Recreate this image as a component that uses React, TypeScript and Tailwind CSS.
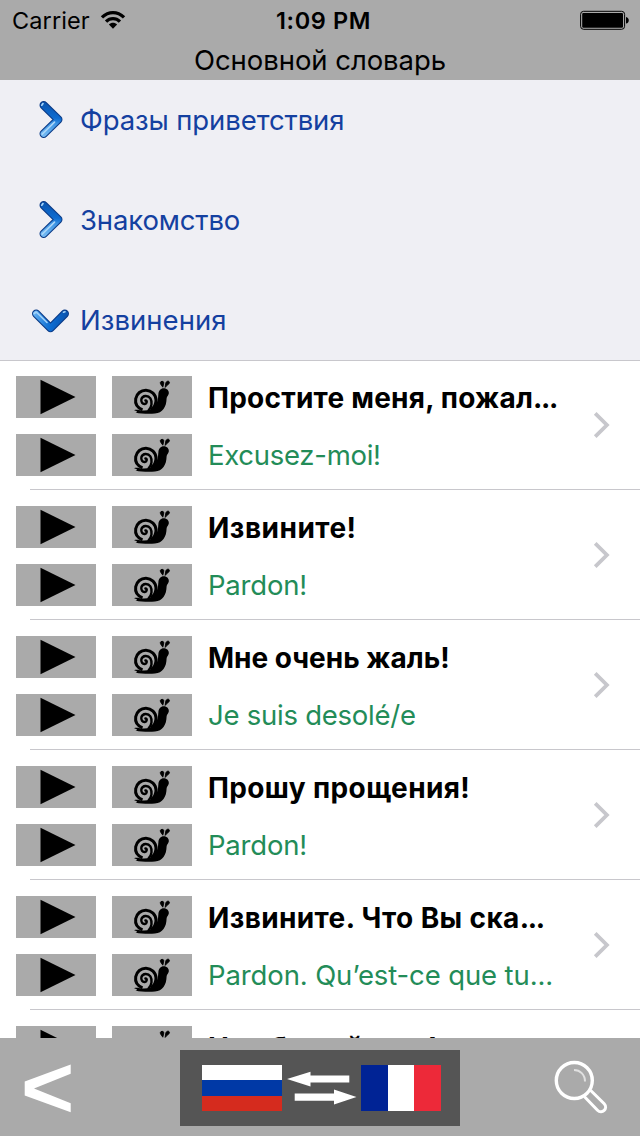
const sections = [
  { title: 'Фразы приветствия', open: false, tracking: 'tracking-[-0.1px]' },
  { title: 'Знакомство', open: false, tracking: 'tracking-[-0.15px]' },
  { title: 'Извинения', open: true, tracking: 'tracking-[0.05px]' },
];

const phrases = [
  { source: 'Простите меня, пожал', cut: true, target: 'Excusez-moi!', tracking: 'tracking-[0.24px]', targetTracking: 'tracking-[-0.28px]' },
  { source: 'Извините!', cut: false, target: 'Pardon!', tracking: 'tracking-[0.5px]', targetTracking: 'tracking-[-0.2px]' },
  { source: 'Мне очень жаль!', cut: false, target: 'Je suis desolé/e', tracking: 'tracking-[0px]', targetTracking: 'tracking-[-0.25px]' },
  { source: 'Прошу прощения!', cut: false, target: 'Pardon!', tracking: 'tracking-[0.37px]', targetTracking: 'tracking-[-0.2px]' },
  { source: 'Извините. Что Вы ска', cut: true, target: 'Pardon. Qu’est-ce que tu...', tracking: 'tracking-[0.38px]', targetTracking: 'tracking-[-0.12px]' },
  { source: 'Не обижайтесь!', cut: false, target: '', tracking: 'tracking-[0.2px]', targetTracking: '' },
];

function SectionArrow({ open }: { open: boolean }) {
  const d = open ? 'M6.2 13.7 L20.5 28.1 L34.8 13.7' : 'M13.7 5.2 L28.3 19.5 L13.7 33.8';
  return (
    <svg width="40" height="40" viewBox="0 0 40 40" fill="none" strokeLinecap="round" strokeLinejoin="round">
      <defs>
        <linearGradient id="blue-open" gradientUnits="userSpaceOnUse" x1="4" y1="12" x2="36" y2="18">
          <stop offset="0" stopColor="#62b0f2" />
          <stop offset="0.45" stopColor="#1a78d6" />
          <stop offset="0.6" stopColor="#0d6bd0" />
          <stop offset="1" stopColor="#0a55b0" />
        </linearGradient>
        <linearGradient id="blue-closed" gradientUnits="userSpaceOnUse" x1="18" y1="3" x2="14" y2="36">
          <stop offset="0" stopColor="#0a55b0" />
          <stop offset="0.42" stopColor="#0d6bd0" />
          <stop offset="0.6" stopColor="#3d94e4" />
          <stop offset="1" stopColor="#74baf3" />
        </linearGradient>
      </defs>
      <path d={d} stroke="#0b3a86" strokeWidth="8.4" />
      <path d={d} stroke={open ? 'url(#blue-open)' : 'url(#blue-closed)'} strokeWidth="6.2" />
      {open ? (
        <path d="M4.2 13.5 L6.2 12 L17 22.5 M33.5 12.2 L35 11.8" stroke="#a5d3f8" strokeWidth="1.6" />
      ) : (
        <path d="M11.8 5.2 L13 3.6 M12.2 34.2 L24.5 22.2" stroke="#a9d5f8" strokeWidth="1.7" />
      )}
    </svg>
  );
}

function PlayButton() {
  return (
    <button className="h-[42px] w-20 bg-[#aaaaaa]">
      <svg width="80" height="42" viewBox="0 0 80 42">
        <path d="M24.5 3.8 L59.5 21 L24.5 38.2 Z" />
      </svg>
    </button>
  );
}

function SnailButton() {
  return (
    <button className="h-[42px] w-20 bg-[#aaaaaa]">
      <svg width="80" height="42" viewBox="0 0 80 42">
        <path d="M22 34.2 C25 33.2 28 34.6 32 34.6 C41.5 34.2 46 29 46.4 18 C46.6 14.8 48.6 12.3 51.8 12.3 C55 12.3 57.2 14.8 56.8 17.6 C56.5 19.6 54.8 20.4 54.6 22.4 C54.4 31 50.5 36.8 43 37.5 C37 38.2 29 37.8 23.5 36.4 C26.5 36.1 25 35.2 22 34.2 Z" />
        <path
          d="M30.5 33.9 C25.4 31.8 22.9 27.8 23.7 22.8 C24.7 17.5 29 14.2 34 14.3 C39.5 14.5 43.8 18.6 44 24 C44.1 27.6 42.5 31 39.5 33.4"
          fill="none"
          stroke="#000"
          strokeWidth="3"
        />
        <path
          d="M36.6 34.4 C40 31 40.3 25.6 38.4 22.4 C36 18.9 30.6 19.2 29.4 23.1 C28.7 26.2 30.6 28.3 32.8 28 C35.2 27.5 35.3 24.8 33.4 24.5"
          fill="none"
          stroke="#000"
          strokeWidth="2.4"
          strokeLinecap="round"
        />
        <path
          d="M50.8 11.2 C50 9.6 48.1 8.2 48.3 6.6 C48.7 4.9 51.6 4.8 51.8 6.8 C51.8 8.4 51 9.4 50.8 11.2 Z M53.2 11.4 C53.5 9.6 53.2 8.2 54 6.5 C54.9 4.6 57.7 4.8 57.4 6.8 C57 8.8 54.4 9.2 53.2 11.4 Z"
          stroke="#000"
          strokeWidth="0.9"
        />
      </svg>
    </button>
  );
}

function StatusBar() {
  return (
    <div className="flex h-10 items-center justify-between pr-2.5 pl-3">
      <div className="flex w-[200px] items-center gap-2.5 pt-0.5">
        <span className="text-[23.5px] tracking-[0.1px]">Carrier</span>
        <svg className="-mt-0.5" width="26" height="20" viewBox="0 0 26 20">
          <path d="M0.8 6.3 C8 -0.9 18 -0.9 25.2 6.3 L22.9 8.6 C17.2 2.9 8.8 2.9 3.1 8.6 Z" />
          <path d="M4.9 10.4 C9.4 5.9 16.6 5.9 21.1 10.4 L18.8 12.7 C15.5 9.4 10.5 9.4 7.2 12.7 Z" />
          <path d="M13 18.8 L8.9 14.5 C11.2 12.2 14.8 12.2 17.1 14.5 Z" />
        </svg>
      </div>
      <span className="pt-0.5 pl-[3px] text-[23.5px] font-semibold tracking-[0.6px]">1:09 PM</span>
      <div className="flex w-[198px] justify-end">
        <svg width="50" height="20" viewBox="0 0 50 20">
          <rect x="0.6" y="1.3" width="44" height="18" rx="3" fill="none" stroke="#000" />
          <rect x="2.2" y="2.9" width="40.8" height="14.8" rx="1.2" />
          <path d="M46 7 C49.7 7.4 49.7 13.2 46 13.6 Z" />
        </svg>
      </div>
    </div>
  );
}

export default function App() {
  return (
    <div className="flex h-[1136px] w-[640px] flex-col overflow-hidden bg-white font-['Inter','Liberation_Sans',sans-serif] text-black">
      <header className="h-20 shrink-0 bg-[#aaaaaa]">
        <StatusBar />
        <h1 className="text-center text-[27.5px] leading-10 tracking-[-0.05px]">Основной словарь</h1>
      </header>

      <main className="min-h-0 flex-1 overflow-hidden">
        <div className="h-[281px] border-b border-[#c8c7cc] bg-[#efeff4]">
          {sections.map((section) => (
            <div key={section.title} className="flex h-[100px] items-start gap-2.5 pt-5 pl-[30px]">
              <SectionArrow open={section.open} />
              <span className={`text-[27.5px] leading-10 text-[#1440a0] ${section.tracking}`}>{section.title}</span>
            </div>
          ))}
        </div>

        <ul className="bg-white">
          {phrases.map((phrase) => (
            <li key={phrase.source} className="group">
              <div className="flex items-center pt-4 pb-[13px] pl-4 group-first:pt-[15px]">
                <div className="grid shrink-0 grid-cols-2 gap-4">
                  <PlayButton />
                  <SnailButton />
                  <PlayButton />
                  <SnailButton />
                </div>
                <div className="ml-4 flex w-[380px] flex-col gap-4 whitespace-nowrap">
                  <span className={`h-[42px] text-[28px] leading-[44px] font-bold ${phrase.tracking}`}>
                    {phrase.source}
                    {phrase.cut && <span className="tracking-[-1.4px]">...</span>}
                  </span>
                  <span className={`h-[42px] text-[27.5px] leading-[42px] text-[#238c58] ${phrase.targetTracking}`}>{phrase.target}</span>
                </div>
                <svg className="mb-[3px]" width="24" height="28" viewBox="0 0 24 28" fill="none" stroke="#c7c7cc" strokeWidth="3.8">
                  <path d="M7.2 2.4 L18.9 14 L7.2 25.6" />
                </svg>
              </div>
              <div className="ml-[30px] h-px bg-[#c8c7cc]" />
            </li>
          ))}
        </ul>
      </main>

      <footer className="z-10 flex h-[98px] shrink-0 items-center justify-between bg-[#aaaaaa] pt-0.5">
        <button className="w-[180px]">
          <svg width="100" height="60" viewBox="0 0 100 60">
            <path d="M70.7 6.5 V15.8 L34 30.5 L70.7 45.3 V54.2 L24.7 37.5 V23.5 Z" fill="#fff" />
          </svg>
        </button>
        <button className="flex h-19 w-[280px] items-center bg-[#555555] pl-[22px]">
          <span className="flex h-[46px] w-20 flex-col">
            <span className="flex-1 bg-white" />
            <span className="flex-1 bg-[#0039a6]" />
            <span className="flex-1 bg-[#d52b1e]" />
          </span>
          <svg width="79" height="46" viewBox="0 0 79 46" fill="#fff">
            <path d="M5 14 L28.5 6.8 V10.4 H67.3 V17.5 H28.5 V21.5 Z" />
            <path d="M74.5 32 L52 24.6 V28.5 H12.7 V35.7 H52 V39.5 Z" />
          </svg>
          <span className="flex h-[46px] w-20">
            <span className="flex-1 bg-[#002395]" />
            <span className="flex-1 bg-white" />
            <span className="flex-1 bg-[#ed2939]" />
          </span>
        </button>
        <button className="flex w-[180px] justify-end pr-7">
          <svg width="60" height="60" viewBox="0 0 60 60" fill="none" stroke="#fff">
            <circle cx="22.3" cy="22.5" r="18" strokeWidth="3.4" />
            <path d="M22 12 C28 12 33 16.5 33 23.5" stroke="#e0e0e0" strokeWidth="2" />
            <path d="M32.5 38.8 L45.5 52.2 C50 56.7 56.5 50.4 52.2 45.8 L38.5 32.2" strokeWidth="3" />
          </svg>
        </button>
      </footer>
    </div>
  );
}
